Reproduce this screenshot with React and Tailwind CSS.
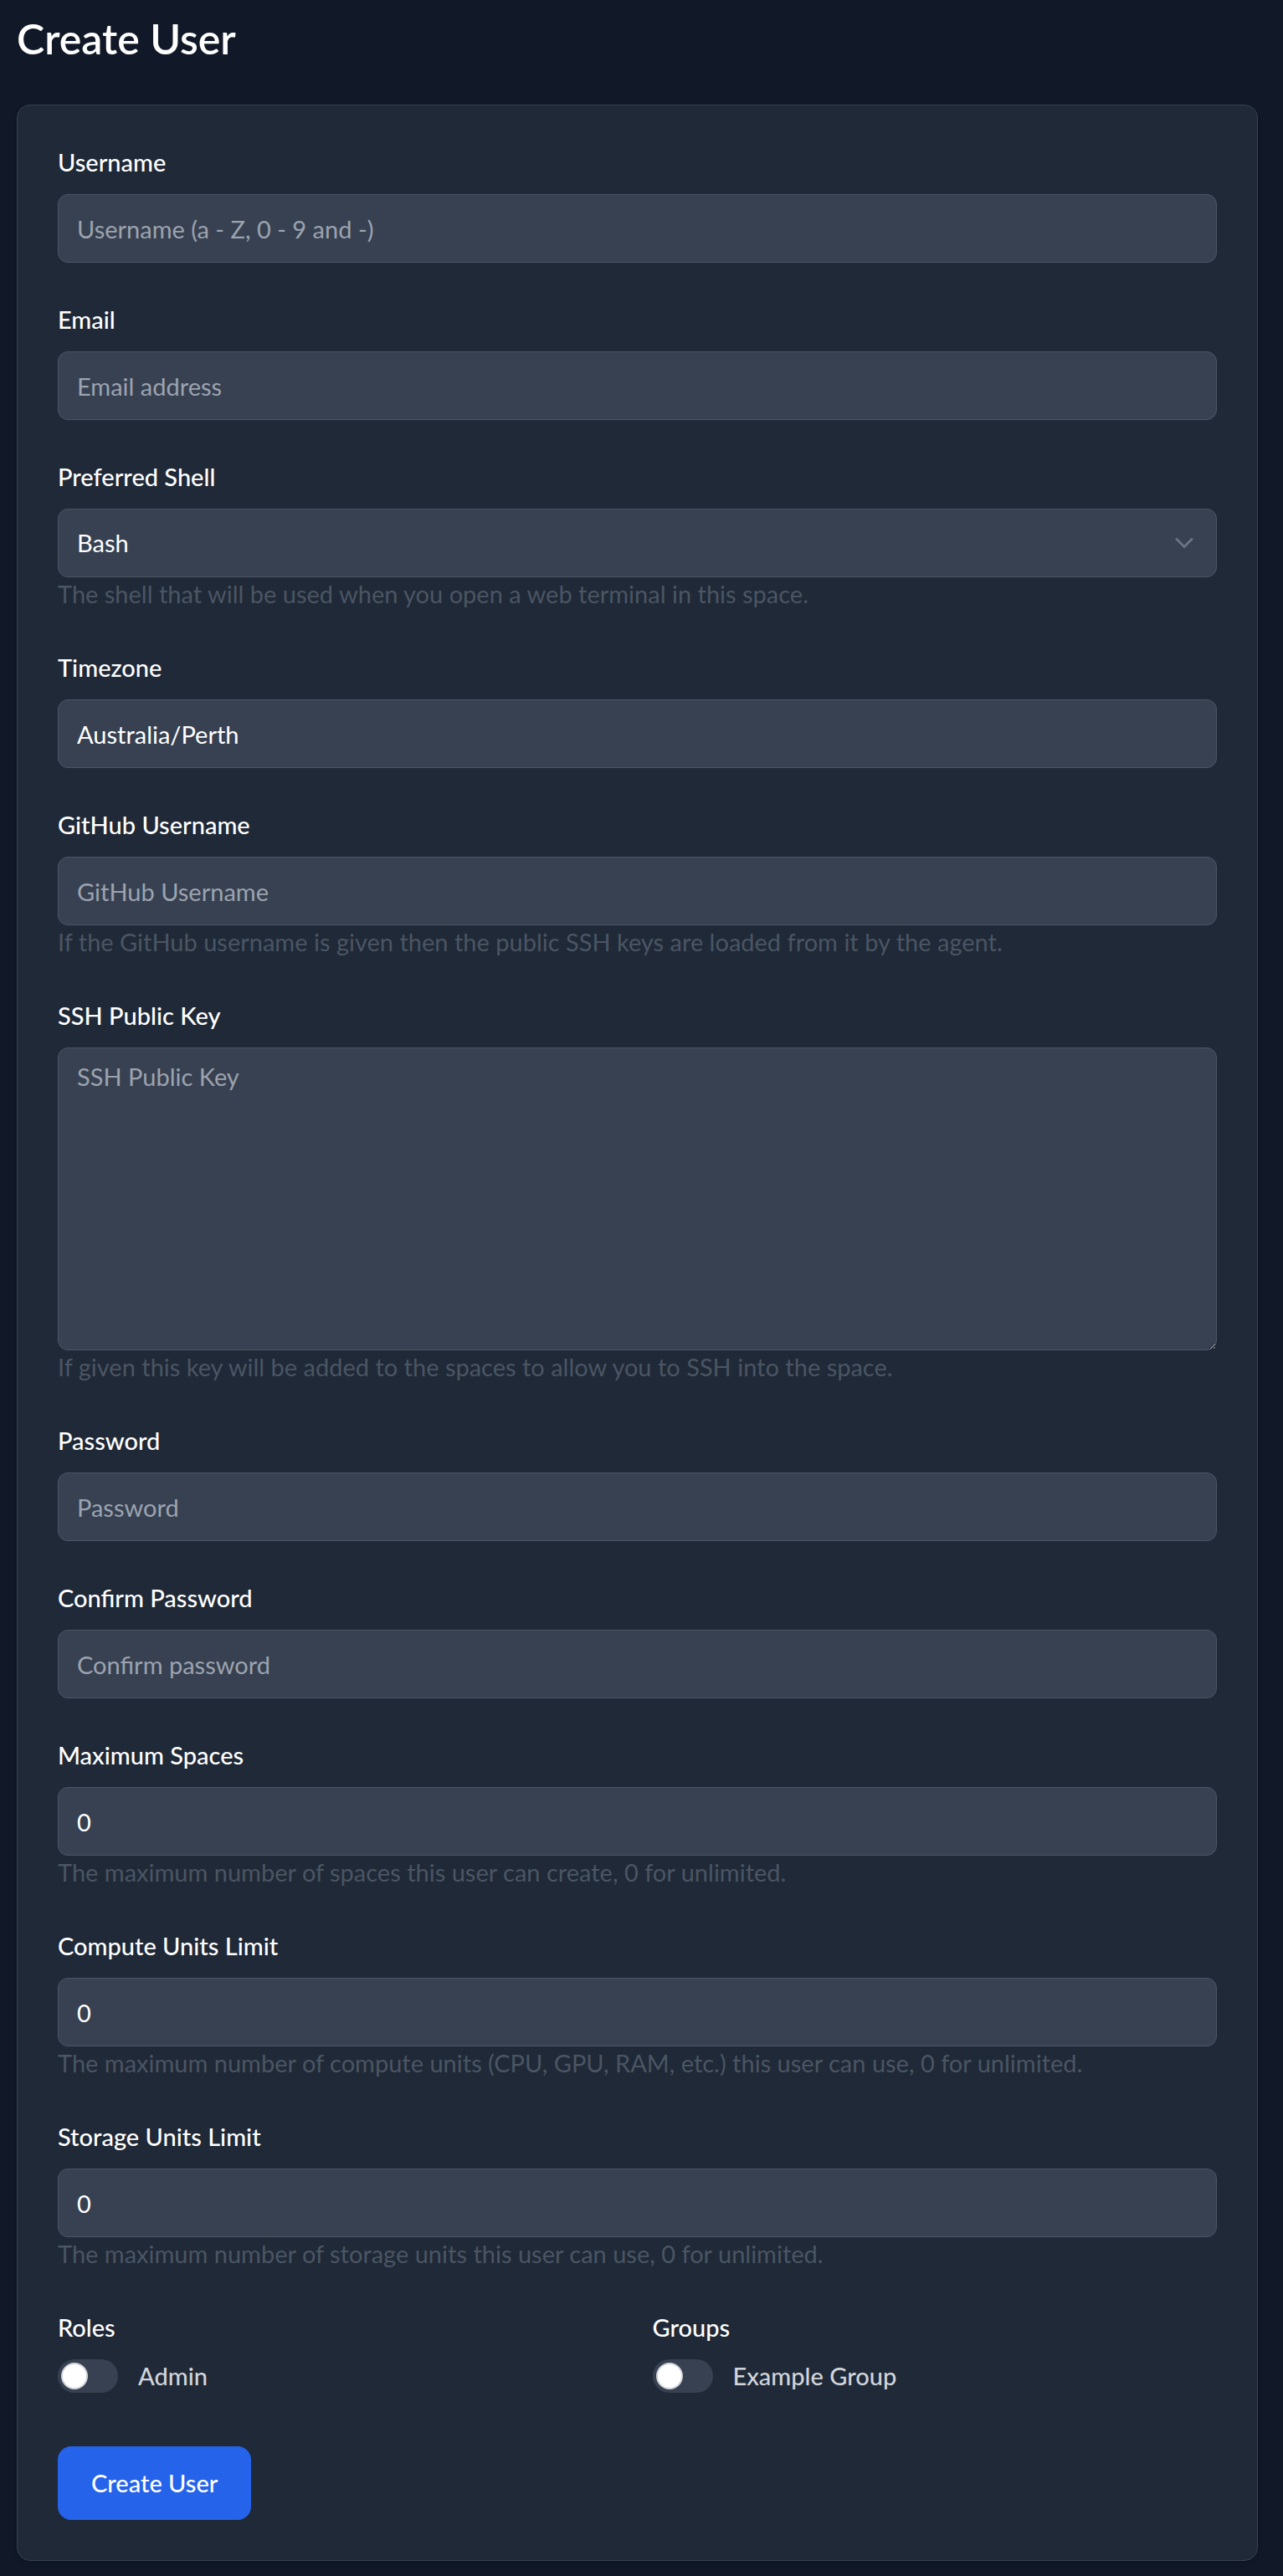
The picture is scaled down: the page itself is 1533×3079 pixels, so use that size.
import React from "react";

function Label({ children }) {
  return (
    <label className="block text-[29px] leading-[40px] font-medium text-white mb-[18px]">
      {children}
    </label>
  );
}

function Help({ children }) {
  return <p className="text-[29px] leading-[40px] text-[#4b5563]">{children}</p>;
}

const inputCls =
  "block w-full h-[82px] rounded-[12px] border border-[#4b5563] bg-[#374151] px-[22px] text-[29px] text-white placeholder:text-[#9ca3af] outline-none";

function Field({ label, placeholder, value, help, type = "text" }) {
  return (
    <div className="mb-[48px]">
      <Label>{label}</Label>
      <input type={type} className={inputCls} placeholder={placeholder} defaultValue={value} />
      {help && <Help>{help}</Help>}
    </div>
  );
}

function Toggle({ label }) {
  return (
    <div className="flex items-center h-[40px]">
      <span className="relative inline-block w-[72px] h-[40px] rounded-full bg-[#374151] shrink-0">
        <span className="absolute left-[4px] top-[4px] w-[32px] h-[32px] rounded-full bg-white border-[2px] border-[#d1d5db]" />
      </span>
      <span className="ml-[24px] text-[29px] leading-[40px] font-medium text-[#d1d5db]">{label}</span>
    </div>
  );
}

export default function App() {
  return (
    <div className="min-h-screen bg-[#111827] pt-[14px] pl-[20px] pr-[30px] pb-[20px] font-['Lato','Noto_Sans',sans-serif]">
      <h1 className="text-[50px] leading-[64px] font-semibold text-white">Create User</h1>
      <div className="mt-[47px] rounded-[16px] border border-[#374151] bg-[#1f2937] shadow-md px-[48px] pt-[48px] pb-[48px]">
        <Field label="Username" placeholder="Username (a - Z, 0 - 9 and -)" />
        <Field label="Email" placeholder="Email address" type="email" />
        <div className="mb-[48px]">
          <Label>Preferred Shell</Label>
          <div className="relative">
            <select className={inputCls + " appearance-none"} defaultValue="bash">
              <option value="bash">Bash</option>
              <option value="zsh">Zsh</option>
              <option value="fish">Fish</option>
            </select>
            <svg
              className="pointer-events-none absolute right-[28px] top-1/2 -translate-y-1/2"
              width="22"
              height="14"
              viewBox="0 0 22 14"
              fill="none"
            >
              <path d="M2 2.5l9 9 9-9" stroke="#6b7280" strokeWidth="3" strokeLinecap="round" strokeLinejoin="round" />
            </svg>
          </div>
          <Help>The shell that will be used when you open a web terminal in this space.</Help>
        </div>
        <Field label="Timezone" value="Australia/Perth" />
        <Field
          label="GitHub Username"
          placeholder="GitHub Username"
          help="If the GitHub username is given then the public SSH keys are loaded from it by the agent."
        />
        <div className="mb-[48px]">
          <Label>SSH Public Key</Label>
          <textarea
            className="block w-full h-[362px] rounded-[12px] border border-[#4b5563] bg-[#374151] px-[22px] py-[14px] text-[29px] leading-[40px] text-white placeholder:text-[#9ca3af] outline-none"
            placeholder="SSH Public Key"
          />
          <Help>If given this key will be added to the spaces to allow you to SSH into the space.</Help>
        </div>
        <Field label="Password" placeholder="Password" type="password" />
        <Field label="Confirm Password" placeholder="Confirm password" type="password" />
        <Field
          label="Maximum Spaces"
          value="0"
          help="The maximum number of spaces this user can create, 0 for unlimited."
        />
        <Field
          label="Compute Units Limit"
          value="0"
          help="The maximum number of compute units (CPU, GPU, RAM, etc.) this user can use, 0 for unlimited."
        />
        <Field
          label="Storage Units Limit"
          value="0"
          help="The maximum number of storage units this user can use, 0 for unlimited."
        />
        <div className="grid grid-cols-2 gap-x-[36px]">
          <div>
            <Label>Roles</Label>
            <Toggle label="Admin" />
          </div>
          <div>
            <Label>Groups</Label>
            <Toggle label="Example Group" />
          </div>
        </div>
        <button className="mt-[64px] h-[88px] px-[40px] rounded-[16px] bg-[#2563eb] text-white text-[29px] font-medium">
          Create User
        </button>
      </div>
    </div>
  );
}
